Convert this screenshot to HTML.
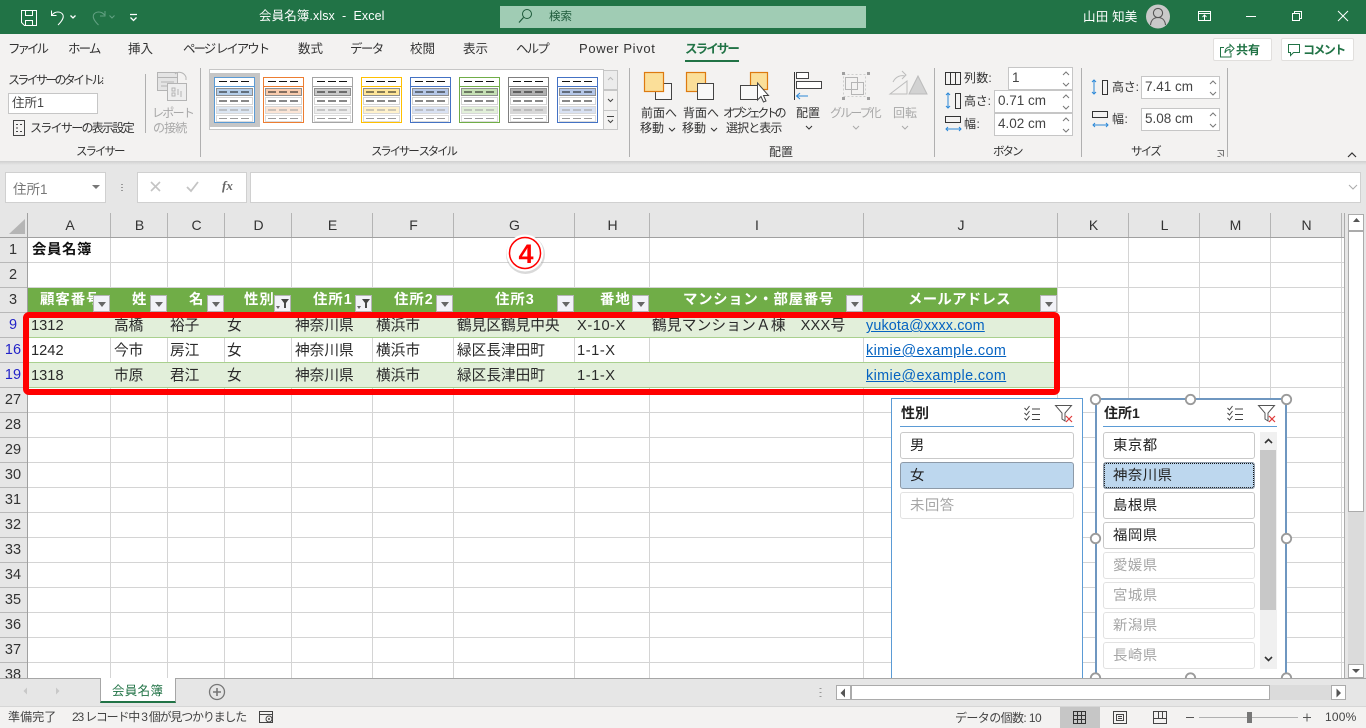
<!DOCTYPE html>
<html lang="ja"><head><meta charset="utf-8"><title>会員名簿.xlsx - Excel</title>
<style>
*{box-sizing:border-box}
html,body{margin:0;padding:0}
body{width:1366px;height:728px;position:relative;overflow:hidden;background:#e6e6e6;font-family:"Liberation Sans","Noto Sans CJK JP",sans-serif;color:#333}
.t{position:absolute;line-height:16px;white-space:nowrap;font-size:12px}
.b{position:absolute}
.g{color:#a8a8a8}
.inp{position:absolute;background:#fff;border:1px solid #c6c6c6;font-size:13.5px;line-height:20px;padding-left:3px;color:#444}
.c{font-size:14.67px;color:#2a2a2a;top:318px}
.r2{top:343px}.r3{top:368px}
.h{font-size:14.4px;font-weight:700;color:#fff;top:292px;letter-spacing:1px}
.cl{font-size:14px;color:#333;top:217px;text-align:center}
.rn{font-size:14.5px;color:#333;left:0;width:26px;text-align:center}
.fb{position:absolute;top:295px;width:17px;height:17px;background:#f2f2f8;border:1px solid #b4b4b4}
.fb:after{content:"";position:absolute;left:4px;top:6px;border:4px solid transparent;border-top:5px solid #666;border-bottom:0}
.ff:after{left:6px;top:3px;border:0;width:8px;height:9px;background:#444;clip-path:polygon(0 0,100% 0,62% 45%,62% 100%,38% 100%,38% 45%)}
.ff:before{content:"";position:absolute;left:1px;top:10px;border:2.5px solid transparent;border-top:3px solid #666;border-bottom:0}
.ml{font-size:14.4px;color:#0563c1;left:866px;text-decoration:underline;letter-spacing:.38px}
.it{position:absolute;height:27px;background:#fff;border:1px solid #c9c9c9;border-radius:3px;font-size:14.4px;line-height:26px;padding-left:9px;color:#222;letter-spacing:.5px}
.it.s{background:#bdd7ee;border-color:#8d9aa8}
.it.n{border-color:#e2e2e2;color:#a6a6a6}
.sl{position:absolute;top:398px;height:282px;background:#fff}
.st{position:absolute;font-size:14px;font-weight:700;line-height:16px;color:#222}
.hl{position:absolute;top:426px;height:1px;background:#5b9bd5}
</style></head><body>

<!-- title bar -->
<div class="b" style="left:0;top:0;width:1366px;height:34px;background:#217346"></div>
<div class="b" style="left:500px;top:6px;width:366px;height:22px;background:#a0ccb4"></div>
<div class="t" style="left:259px;top:8px;color:#fff;font-size:12.5px;letter-spacing:.1px">会員名簿.xlsx&nbsp; -&nbsp; Excel</div>
<div class="t" style="left:549px;top:9px;color:#1d5a3a;font-size:11.5px">検索</div>
<div class="t" style="left:1083px;top:9px;color:#fff;font-size:12.5px;letter-spacing:.2px">山田 知美</div>

<!-- ribbon -->
<div class="b" style="left:0;top:34px;width:1366px;height:127px;background:#f3f2f1"></div>
<div class="b" style="left:0;top:161px;width:1366px;height:4px;background:linear-gradient(#cfcfcf,#e6e6e6)"></div>
<div class="t" style="left:8px;top:41px;font-size:12.5px;letter-spacing:-3px">ファイル</div>
<div class="t" style="left:68px;top:41px;font-size:12.5px;letter-spacing:-1.9px">ホーム</div>
<div class="t" style="left:128px;top:41px;font-size:12.5px">挿入</div>
<div class="t" style="left:183px;top:41px;font-size:12.5px;letter-spacing:-2px">ページ レイアウト</div>
<div class="t" style="left:298px;top:41px;font-size:12.5px">数式</div>
<div class="t" style="left:350px;top:41px;font-size:12.5px;letter-spacing:-1.6px">データ</div>
<div class="t" style="left:410px;top:41px;font-size:12.5px">校閲</div>
<div class="t" style="left:463px;top:41px;font-size:12.5px">表示</div>
<div class="t" style="left:516px;top:41px;font-size:12.5px;letter-spacing:-1.9px">ヘルプ</div>
<div class="t" style="left:579px;top:41px;font-size:13px;letter-spacing:.65px">Power Pivot</div>
<div class="t" style="left:685px;top:41px;font-size:12.5px;font-weight:700;color:#217346;letter-spacing:-1.9px">スライサー</div>
<div class="b" style="left:685px;top:60px;width:54px;height:2px;background:#217346"></div>
<div class="b" style="left:1213px;top:38px;width:59px;height:23px;background:#fff;border:1px solid #e1dfdd;border-radius:2px"></div>
<div class="b" style="left:1281px;top:38px;width:73px;height:23px;background:#fff;border:1px solid #e1dfdd;border-radius:2px"></div>
<div class="t" style="left:1236px;top:42px;font-size:12px;font-weight:700;color:#217346">共有</div>
<div class="t" style="left:1303px;top:42px;font-size:12px;font-weight:700;color:#217346;letter-spacing:-1.6px">コメント</div>

<div class="t" style="left:8px;top:72px;letter-spacing:-2.7px">スライサーのタイトル:</div>
<div class="inp" style="left:8px;top:93px;width:90px;height:21px;font-size:12.5px;line-height:19px;padding-left:3px">住所1</div>
<div class="t" style="left:30px;top:120px;letter-spacing:-1.7px">スライサーの表示設定</div>
<div class="t g" style="left:152px;top:105px;letter-spacing:-1.7px">レポート</div>
<div class="t g" style="left:153px;top:120px;letter-spacing:-.9px">の接続</div>
<div class="t" style="left:76px;top:144px;font-size:11.5px;letter-spacing:-2px">スライサー</div>
<div class="t" style="left:371px;top:144px;font-size:11.5px;letter-spacing:-2.2px">スライサー スタイル</div>
<div class="t" style="left:769px;top:144px;font-size:12px">配置</div>
<div class="t" style="left:993px;top:144px;font-size:11.5px;letter-spacing:-2px">ボタン</div>
<div class="t" style="left:1131px;top:144px;font-size:11.5px;letter-spacing:-1.7px">サイズ</div>

<div class="t" style="left:641px;top:105px">前面へ</div>
<div class="t" style="left:640px;top:120px">移動</div>
<div class="t" style="left:683px;top:105px">背面へ</div>
<div class="t" style="left:682px;top:120px">移動</div>
<div class="t" style="left:723px;top:105px;letter-spacing:-3.4px">オブジェクトの</div>
<div class="t" style="left:726px;top:120px;letter-spacing:-.9px">選択と表示</div>
<div class="t" style="left:796px;top:105px">配置</div>
<div class="t g" style="left:830px;top:105px;letter-spacing:-1.9px">グループ化</div>
<div class="t g" style="left:893px;top:105px">回転</div>

<div class="t" style="left:964px;top:70px;letter-spacing:.2px">列数:</div>
<div class="t" style="left:964px;top:93px;letter-spacing:-.2px">高さ:</div>
<div class="t" style="left:964px;top:116px;letter-spacing:.5px">幅:</div>
<div class="inp" style="left:1008px;top:67px;width:65px;height:23px">1</div>
<div class="inp" style="left:994px;top:90px;width:79px;height:23px">0.71 cm</div>
<div class="inp" style="left:994px;top:113px;width:79px;height:23px">4.02 cm</div>
<div class="t" style="left:1112px;top:79px;letter-spacing:-.2px">高さ:</div>
<div class="t" style="left:1112px;top:111px;letter-spacing:.5px">幅:</div>
<div class="inp" style="left:1141px;top:76px;width:79px;height:23px">7.41 cm</div>
<div class="inp" style="left:1141px;top:108px;width:79px;height:23px">5.08 cm</div>

<!-- formula bar -->
<div class="inp" style="left:5px;top:172px;width:101px;height:31px;border-color:#d0d0d0;font-size:13.5px;line-height:34px;color:#777;padding-left:7px">住所1</div>
<div class="b" style="left:137px;top:172px;width:110px;height:31px;background:#fff;border:1px solid #d0d0d0"></div>
<div class="b" style="left:250px;top:172px;width:1111px;height:31px;background:#fff;border:1px solid #d0d0d0"></div>
<div class="t" style="left:222px;top:178px;font-family:'Liberation Serif',serif;font-style:italic;font-weight:700;font-size:13px;color:#666">fx</div>

<!-- sheet -->
<div class="b" style="left:28px;top:238px;width:1316px;height:440px;background:#fff"></div>
<div class="b" style="left:28px;top:287px;width:1029px;height:25px;background:#70ad47"></div>
<div class="b" style="left:28px;top:312px;width:1029px;height:25px;background:#e2efda"></div>
<div class="b" style="left:28px;top:362px;width:1029px;height:25px;background:#e2efda"></div>

<svg class="b" style="left:0;top:0" width="1366" height="728" viewBox="0 0 1366 728" fill="none">
 <defs>
  <symbol id="th" width="42" height="47" viewBox="0 0 42 47" overflow="visible">
   <rect x=".5" y=".5" width="40" height="45" fill="#fff" stroke="currentColor"/>
   <rect x=".5" y="9" width="40" height="1" fill="currentColor"/>
   <rect x="2.5" y="11.5" width="36" height="7" fill="var(--a)" stroke="#8f8f8f"/>
   <rect x="2.5" y="20.5" width="36" height="7" fill="#fff" stroke="#d4d4d4"/>
   <rect x="2.5" y="29.5" width="36" height="7" fill="var(--b)" stroke="#d8d8d8"/>
   <rect x="2.5" y="38.5" width="36" height="6" fill="#fff" stroke="#dcdcdc"/>
   <path d="M5 4.5h8M16 4.5h8M27 4.5h8M5 15h8M16 15h8M27 15h8M5 24h8M16 24h8M27 24h8" stroke="#111"/>
   <path d="M5 33h8M16 33h8M27 33h8M5 41.5h8M16 41.5h8M27 41.5h8" stroke="#9a9a9a"/>
  </symbol>
  <symbol id="spin" width="12" height="22" viewBox="0 0 12 22"><path d="M3 7l3-3 3 3M3 15l3 3 3-3" stroke="#777" fill="none"/></symbol>
 </defs>

 <!-- QAT -->
 <g stroke="#fff" stroke-width="1" fill="none">
  <path d="M21.5 10.5h15v15h-12l-3-3z"/><path d="M25.5 10.5v5h7v-5M25.5 25.5v-5h7v5"/>
  <path d="M51.5 10.5v5h5" /><path d="M52 15c3-4 9-4 11 0 1 3-1 6-5 10"/>
  <path d="M70.5 15.5l2.5 2.5 2.5-2.5" stroke-width="1.3"/>
  <g stroke="#63a183"><path d="M105 11v5h-5"/><path d="M104.5 15c-3-4-9-4-11 0-1 3 1 6 5 10"/><path d="M109.5 15.5l2.5 2.5 2.5-2.5"/></g>
  <path d="M130 14.5h7M130.5 17.5l3 3 3-3" stroke-width="1.3"/>
 </g>
 <!-- search icon -->
 <circle cx="527" cy="14" r="4.5" stroke="#1d5a3a"/><path d="M523.5 17.5l-4.5 5" stroke="#1d5a3a" stroke-width="1.2"/>
 <!-- user -->
 <circle cx="1158" cy="16.500" r="12" fill="#c9c9c9"/>
 <circle cx="1158" cy="13" r="4.6" stroke="#555" stroke-width="1.1"/><path d="M1150.500 25c.5-5 3.500-7.500 7.500-7.500s7 2.500 7.500 7.500" stroke="#555" stroke-width="1.1"/>
 <!-- window controls -->
 <g stroke="#fff">
  <path d="M1198.500 11.500h12v9h-12zM1198.500 13.500h12M1204.500 20v-4.500M1202.500 17l2-2 2 2"/>
  <path d="M1246 16.500h10" stroke-width="1"/>
  <path d="M1292.500 13.500h7v7h-7zM1294.500 13v-1.500h7v7h-1.500"/>
  <path d="M1338 11l10 10M1348 11l-10 10"/>
 </g>
 <!-- share / comment -->
 <g stroke="#217346" fill="none"><path d="M1224 47.500h-3.500v9.500h10.500v-4"/><path d="M1225 53c0-4 2-6 5-6v-2.500l4 4-4 4v-3c-2 0-4 1-5 3.500z" /></g>
 <path d="M1288.500 44.500h11v8h-6l-3 3v-3h-2z" stroke="#217346"/>

 <!-- ribbon left icons -->
 <rect x="13.500" y="120.500" width="11" height="15" stroke="#444"/><path d="M16 124.500h2M16 128h2M16 131.500h2M20 124.500h2M20 131.500h2" stroke="#444"/>
 <g stroke="#b0b0b0"><path d="M145.500 74v59M200.500 68v89M629.500 68v89M934.500 68v89M1081.500 68v89M1227.500 68v89"/></g>
 <g stroke="#b4b4b4" fill="#e4e4e4"><rect x="157.500" y="72.500" width="20" height="18"/><path d="M157.500 77.500h20M161 82h13M161 86h13"/><rect x="167.500" y="83.500" width="19" height="17" fill="#eee"/><path d="M172 88h3v3h-3zM172 93h3v3h-3zM178 89v6M181 91v6" fill="none"/><path d="M175 74c3-3 9-2 11 3v3" fill="none"/></g>

 <!-- gallery -->
 <rect x="209.500" y="69.500" width="394" height="60" fill="#fff" stroke="#c6c6c6"/>
 <rect x="210" y="73" width="50" height="54" fill="#c6c6c6"/>
 <use href="#th" x="214" y="77" style="color:#5b9bd5;--a:#b4cde8;--b:#dce6f2"/>
 <use href="#th" x="263" y="77" style="color:#ed7d31;--a:#f8cbad;--b:#fbe5d6"/>
 <use href="#th" x="312" y="77" style="color:#a5a5a5;--a:#c9c9c9;--b:#ededed"/>
 <use href="#th" x="361" y="77" style="color:#ffc000;--a:#ffe699;--b:#fff2cc"/>
 <use href="#th" x="410" y="77" style="color:#4472c4;--a:#b4c6e7;--b:#d9e2f3"/>
 <use href="#th" x="459" y="77" style="color:#70ad47;--a:#c5e0b4;--b:#e2f0d9"/>
 <use href="#th" x="508" y="77" style="color:#7f7f7f;--a:#b0b0b0;--b:#d9d9d9"/>
 <use href="#th" x="557" y="77" style="color:#4472c4;--a:#b4c6e7;--b:#d9e2f3"/>
 <g fill="#f3f2f1" stroke="#c6c6c6"><rect x="603.500" y="70.500" width="14" height="19" fill="#ececec"/><rect x="603.500" y="90.500" width="14" height="20"/><rect x="603.500" y="110.500" width="14" height="19"/></g>
 <path d="M608 80l2.500-2.500 2.500 2.500" stroke="#bbb"/><path d="M608 99l2.500 2.500 2.500-2.500M607 116.500h7M608 120l2.500 2.500 2.500-2.500" stroke="#444"/>

 <!-- arrange icons -->
 <rect x="655.500" y="83.500" width="16" height="16" fill="#f8f8f8" stroke="#444"/>
 <rect x="644.500" y="72.500" width="19" height="19" fill="#fbdf99" stroke="#dd7a10" stroke-width="1.2"/>
 <rect x="686.500" y="72.500" width="19" height="19" fill="#fbdf99" stroke="#dd7a10" stroke-width="1.2"/>
 <rect x="697.500" y="83.500" width="16" height="16" fill="#f8f8f8" stroke="#444"/>
 <rect x="750.500" y="72.500" width="17" height="17" fill="#fbdf99" stroke="#dd7a10" stroke-width="1.2"/>
 <rect x="740.500" y="85.500" width="17" height="14" fill="#f8f8f8" stroke="#444"/>
 <path d="M757.500 83v17l3.500-3.500 2.500 5.500 2.500-1-2.500-5.500h5z" fill="#fff" stroke="#444"/>
 <path d="M794.500 72v28" stroke="#333"/>
 <rect x="796.500" y="72.500" width="12" height="6" fill="#fff" stroke="#444"/><rect x="796.500" y="81.500" width="25" height="7" fill="#fff" stroke="#444"/>
 <path d="M808 96h-11M800 93l-3.500 3 3.500 3" stroke="#2b88d8"/>
 <g stroke="#b5b5b5"><rect x="845.500" y="77.500" width="12" height="12"/><rect x="851.500" y="82.500" width="12" height="12"/><path d="M843.500 74.500h22v22h-22z" stroke-dasharray="2 2" opacity=".6"/></g>
 <g fill="#9f9f9f"><rect x="842" y="72" width="3" height="3"/><rect x="867" y="72" width="3" height="3"/><rect x="842" y="97" width="3" height="3"/><rect x="867" y="97" width="3" height="3"/></g>
 <path d="M909 94l9-18 9 18z" fill="#d2d2d2" stroke="#bbb"/><path d="M890 94l17-13v13zM893 82c3-6 8-7 12-6M902 71l4 4-4 4" stroke="#bcbcbc" fill="none"/>
 <path d="M672 127l3 3 3-3" stroke="#333" transform="translate(-3 1)"/><path d="M714 127l3 3 3-3" stroke="#333" transform="translate(-3 1)"/>
 <path d="M806 126l3 3 3-3" stroke="#333"/><path d="M853 126l3 3 3-3M902 126l3 3 3-3" stroke="#aaa"/>

 <!-- button / size icons -->
 <path d="M945.500 72.500h15v12h-15zM950.500 72v13M955.500 72v13" stroke="#333"/>
 <path d="M955.500 93.500h5v15h-5z" stroke="#333"/>
 <path d="M948 93v15M946 95l2-2 2 2M946 106l2 2 2-2" stroke="#2b88d8"/>
 <path d="M945.500 116.500h15v6h-15z" stroke="#333"/><path d="M946 129h15M948 127l-2 2 2 2M959 127l2 2-2 2" stroke="#2b88d8"/>
 <path d="M1102.500 80.500h5v14h-5z" stroke="#333"/><path d="M1094 80v14M1092 82l2-2 2 2M1092 92l2 2 2-2" stroke="#2b88d8"/>
 <path d="M1092.500 111.500h15v6h-15z" stroke="#333"/><path d="M1093 125h15M1095 123l-2 2 2 2M1106 123l2 2-2 2" stroke="#2b88d8"/>
 <use href="#spin" x="1060" y="68"/><use href="#spin" x="1060" y="91"/><use href="#spin" x="1060" y="114"/>
 <use href="#spin" x="1207" y="77"/><use href="#spin" x="1207" y="109"/>
 <path d="M1217.500 150.500h6v6M1219.500 152.500l3 3M1217.500 156.500h3" stroke="#777"/>
 <path d="M1348 157l4-4 4 4" stroke="#333" stroke-width="1.2"/>

 <!-- formula bar details -->
 <path d="M92 185h8l-4 4z" fill="#777"/>
 <path d="M122 184v1M122 187v1M122 190v1" stroke="#999" stroke-width="2"/>
 <path d="M151 182l9 9M160 182l-9 9" stroke="#c4c4c4" stroke-width="1.6"/>
 <path d="M187 187l4 4 7-9" stroke="#c4c4c4" stroke-width="1.8"/>
 <path d="M1349 185l4 4 4-4" stroke="#aaa"/>

 <!-- headers -->
 <rect x="0" y="213" width="1344" height="25" fill="#e6e6e6"/>
 <rect x="0" y="238" width="28" height="440" fill="#e6e6e6"/>
 <path d="M25 219v15H9z" fill="#b5b5b5"/>
 <path d="M0 237.500h1344M27.500 213v465" stroke="#a0a0a0"/>
 <path d="M110.500 213v24M167.500 213v24M224.500 213v24M291.500 213v24M372.500 213v24M453.500 213v24M574.500 213v24M649.500 213v24M863.500 213v24M1057.500 213v24M1128.500 213v24M1199.500 213v24M1270.500 213v24M1341.500 213v24" stroke="#b4b4b4"/>
 <path d="M0 262.500h27M0 287.500h27M0 312.500h27M0 337.500h27M0 362.500h27M0 387.500h27M0 412.500h27M0 437.500h27M0 462.500h27M0 487.500h27M0 512.500h27M0 537.500h27M0 562.500h27M0 587.500h27M0 612.500h27M0 637.500h27M0 662.500h27" stroke="#b8b8b8"/>
 <!-- grid -->
 <path d="M110.500 238v49M167.500 238v49M224.500 238v49M291.500 238v49M372.500 238v49M453.500 238v49M574.500 238v49M649.500 238v49M863.500 238v49M1057.500 238v440M1128.500 238v440M1199.500 238v440M1270.500 238v440M1341.500 238v440" stroke="#d4d4d4"/>
 <path d="M110.500 337v25M167.500 337v25M224.500 337v25M291.500 337v25M372.500 337v25M453.500 337v25M574.500 337v25M649.500 337v25M863.500 337v25M110.500 387v291M167.500 387v291M224.500 387v291M291.500 387v291M372.500 387v291M453.500 387v291M574.500 387v291M649.500 387v291M863.500 387v291" stroke="#d4d4d4"/>
 <path d="M28 262.500h1316M28 287.500h1316M1057 312.500h287M1057 337.500h287M1057 362.500h287M28 387.500h1316M28 412.500h1316M28 437.500h1316M28 462.500h1316M28 487.500h1316M28 512.500h1316M28 537.500h1316M28 562.500h1316M28 587.500h1316M28 612.500h1316M28 637.500h1316M28 662.500h1316" stroke="#d4d4d4"/>
 <path d="M28 337.500h1029M28 362.500h1029M28 387.500h1029" stroke="#a9d08e"/>
</svg>

<div class="t cl" style="left:29px;width:82px">A</div><div class="t cl" style="left:111px;width:57px">B</div><div class="t cl" style="left:168px;width:57px">C</div><div class="t cl" style="left:225px;width:67px">D</div><div class="t cl" style="left:292px;width:81px">E</div><div class="t cl" style="left:373px;width:81px">F</div><div class="t cl" style="left:454px;width:121px">G</div><div class="t cl" style="left:575px;width:75px">H</div><div class="t cl" style="left:650px;width:214px">I</div><div class="t cl" style="left:864px;width:194px">J</div><div class="t cl" style="left:1058px;width:71px">K</div><div class="t cl" style="left:1129px;width:71px">L</div><div class="t cl" style="left:1200px;width:71px">M</div><div class="t cl" style="left:1271px;width:71px">N</div>

<div class="t rn" style="top:242px">1</div><div class="t rn" style="top:267px">2</div><div class="t rn" style="top:292px">3</div>
<div class="t rn" style="top:317px;color:#2323c8">9</div><div class="t rn" style="top:342px;color:#2323c8">16</div><div class="t rn" style="top:367px;color:#2323c8">19</div>
<div class="t rn" style="top:392px">27</div><div class="t rn" style="top:417px">28</div><div class="t rn" style="top:442px">29</div><div class="t rn" style="top:467px">30</div><div class="t rn" style="top:492px">31</div><div class="t rn" style="top:517px">32</div><div class="t rn" style="top:542px">33</div><div class="t rn" style="top:567px">34</div><div class="t rn" style="top:592px">35</div><div class="t rn" style="top:617px">36</div><div class="t rn" style="top:642px">37</div><div class="t rn" style="top:667px">38</div>

<div class="t" style="left:32px;top:242px;font-size:14.4px;font-weight:700;color:#111;letter-spacing:.6px">会員名簿</div>

<div class="b" style="left:40px;top:287px;width:56px;height:25px;overflow:hidden"><div class="t h" style="left:0;top:5px">顧客番号</div></div>
<div class="t h" style="left:132px">姓</div><div class="t h" style="left:189px">名</div><div class="t h" style="left:244px">性別</div><div class="t h" style="left:313px">住所1</div><div class="t h" style="left:394px">住所2</div><div class="t h" style="left:495px">住所3</div><div class="t h" style="left:600px">番地</div><div class="t h" style="left:683px;letter-spacing:.7px">マンション・部屋番号</div><div class="t h" style="left:908px;letter-spacing:.3px">メールアドレス</div>

<div class="fb" style="left:93px"></div><div class="fb" style="left:150px"></div><div class="fb" style="left:207px"></div><div class="fb ff" style="left:274px"></div><div class="fb ff" style="left:355px"></div><div class="fb" style="left:436px"></div><div class="fb" style="left:557px"></div><div class="fb" style="left:632px"></div><div class="fb" style="left:846px"></div><div class="fb" style="left:1040px"></div>

<div class="t c" style="left:31px">1312</div><div class="t c" style="left:114px">高橋</div><div class="t c" style="left:170px">裕子</div><div class="t c" style="left:227px">女</div><div class="t c" style="left:295px">神奈川県</div><div class="t c" style="left:376px">横浜市</div><div class="t c" style="left:457px">鶴見区鶴見中央</div><div class="t c" style="left:577px;letter-spacing:.55px">X-10-X</div><div class="t c" style="left:652px;letter-spacing:.2px">鶴見マンションＡ棟　XXX号</div>
<div class="t c r2" style="left:31px">1242</div><div class="t c r2" style="left:114px">今市</div><div class="t c r2" style="left:170px">房江</div><div class="t c r2" style="left:227px">女</div><div class="t c r2" style="left:295px">神奈川県</div><div class="t c r2" style="left:376px">横浜市</div><div class="t c r2" style="left:457px">緑区長津田町</div><div class="t c r2" style="left:577px;letter-spacing:.55px">1-1-X</div>
<div class="t c r3" style="left:31px">1318</div><div class="t c r3" style="left:114px">市原</div><div class="t c r3" style="left:170px">君江</div><div class="t c r3" style="left:227px">女</div><div class="t c r3" style="left:295px">神奈川県</div><div class="t c r3" style="left:376px">横浜市</div><div class="t c r3" style="left:457px">緑区長津田町</div><div class="t c r3" style="left:577px;letter-spacing:.55px">1-1-X</div>
<div class="t ml" style="top:318px;letter-spacing:.12px">yukota@xxxx.com</div><div class="t ml" style="top:343px">kimie@example.com</div><div class="t ml" style="top:368px">kimie@example.com</div>

<!-- red frame -->
<div class="b" style="left:23px;top:312px;width:1037px;height:83px;border:6.5px solid #ff0000;border-radius:6px"></div>

<!-- step badge -->
<svg class="b" style="left:500px;top:228px" width="50" height="50" viewBox="0 0 50 50"><circle cx="25.500" cy="26.500" r="19.500" fill="#aaa" opacity=".45"/><circle cx="25" cy="25" r="18.500" fill="#fff"/><circle cx="25" cy="25" r="15.500" fill="#fff" stroke="#ff0000" stroke-width="1.500"/></svg>
<div class="t" style="left:510px;top:240px;width:32px;text-align:center;font-size:27px;font-weight:700;color:#ff0000;line-height:28px">4</div>

<!-- slicers -->
<div class="b" style="left:0;top:0;width:1366px;height:678px;overflow:hidden">
 <div class="sl" style="left:891px;width:192px;border:1.5px solid #5b9bd5"></div>
 <div class="st" style="left:901px;top:405px">性別</div>
 <div class="hl" style="left:900px;width:174px"></div>
 <div class="it" style="left:900px;top:432px;width:174px">男</div>
 <div class="it s" style="left:900px;top:462px;width:174px">女</div>
 <div class="it n" style="left:900px;top:492px;width:174px">未回答</div>

 <div class="sl" style="left:1095px;width:192px;border:2px solid #6f97c0"></div>
 <div class="st" style="left:1104px;top:405px">住所1</div>
 <div class="hl" style="left:1103px;width:174px"></div>
 <div class="it" style="left:1103px;top:432px;width:152px">東京都</div>
 <div class="it s" style="left:1103px;top:462px;width:152px;outline:1px dotted #111;outline-offset:-2px">神奈川県</div>
 <div class="it" style="left:1103px;top:492px;width:152px">島根県</div>
 <div class="it" style="left:1103px;top:522px;width:152px">福岡県</div>
 <div class="it n" style="left:1103px;top:552px;width:152px">愛媛県</div>
 <div class="it n" style="left:1103px;top:582px;width:152px">宮城県</div>
 <div class="it n" style="left:1103px;top:612px;width:152px">新潟県</div>
 <div class="it n" style="left:1103px;top:642px;width:152px">長崎県</div>
 <div class="b" style="left:1260px;top:432px;width:17px;height:237px;background:#f0f0f0"></div>
 <div class="b" style="left:1260px;top:450px;width:16px;height:160px;background:#c8c8c8"></div>
 <svg class="b" style="left:0;top:0" width="1366" height="678" viewBox="0 0 1366 678" fill="none">
  <path d="M1265 443l3.500-3.500 3.500 3.500M1265 657l3.500 3.500 3.500-3.500" stroke="#333" stroke-width="1.600"/>
  <path d="M1024.500 408l2 2 3-4M1024.500 413l2 2 3-4M1024.500 418l2 2 3-4" stroke="#444"/><path d="M1032 409h8M1032 414.500h8M1032 419.500h8" stroke="#444"/>
  <path d="M1055.500 405.500h16l-6.500 7.500v8l-3-2v-6z" stroke="#555"/><path d="M1066 416l6 6M1072 416l-6 6" stroke="#e03b3b" stroke-width="1.200"/>
  <path d="M1227.500 408l2 2 3-4M1227.500 413l2 2 3-4M1227.500 418l2 2 3-4" stroke="#444"/><path d="M1235 409h8M1235 414.500h8M1235 419.500h8" stroke="#444"/>
  <path d="M1258.500 405.500h16l-6.500 7.500v8l-3-2v-6z" stroke="#555"/><path d="M1269 416l6 6M1275 416l-6 6" stroke="#e03b3b" stroke-width="1.200"/>
  <g fill="#fff" stroke="#9a9a9a" stroke-width="1.800"><circle cx="1095.500" cy="399.500" r="4.700"/><circle cx="1190.500" cy="399.500" r="4.700"/><circle cx="1286.500" cy="399.500" r="4.700"/><circle cx="1095.500" cy="538.500" r="4.700"/><circle cx="1286.500" cy="538.500" r="4.700"/><circle cx="1095.500" cy="678" r="4.700"/><circle cx="1190.500" cy="678" r="4.700"/><circle cx="1286.500" cy="678" r="4.700"/></g>
 </svg>
</div>

<!-- right scrollbar -->
<div class="b" style="left:1344px;top:213px;width:22px;height:465px;background:#e6e6e6;border-left:1px solid #ababab"></div>
<div class="b" style="left:1348px;top:231px;width:16px;height:434px;background:#dbdbdb"></div>
<div class="b" style="left:1348px;top:231px;width:16px;height:281px;background:#fff;border:1px solid #ababab"></div>
<div class="b" style="left:1348px;top:214px;width:16px;height:17px;background:#fff;border:1px solid #ababab"></div>
<div class="b" style="left:1348px;top:664px;width:16px;height:14px;background:#fff;border:1px solid #ababab"></div>

<!-- tab bar -->
<div class="b" style="left:0;top:678px;width:1366px;height:28px;background:#e6e6e6;border-top:1px solid #a6a6a6"></div>
<div class="b" style="left:100px;top:678px;width:76px;height:25px;background:#fff;border:1px solid #a6a6a6;border-top:0;border-bottom:2px solid #217346"></div>
<div class="t" style="left:112px;top:683px;font-size:12.5px;color:#217346;letter-spacing:.3px">会員名簿</div>

<div class="b" style="left:836px;top:685px;width:510px;height:15px;background:#dbdbdb"></div>
<div class="b" style="left:851px;top:685px;width:419px;height:15px;background:#fff;border:1px solid #ababab"></div>
<div class="b" style="left:836px;top:685px;width:15px;height:15px;background:#fff;border:1px solid #ababab"></div>
<div class="b" style="left:1331px;top:685px;width:15px;height:15px;background:#fff;border:1px solid #ababab"></div>

<!-- status bar -->
<div class="b" style="left:0;top:706px;width:1366px;height:22px;background:#f3f2f1;border-top:1px solid #d6d6d6"></div>
<div class="b" style="left:1060px;top:707px;width:40px;height:21px;background:#c6c6c6"></div>
<div class="t" style="left:8px;top:709px;font-size:12px;color:#444;letter-spacing:.1px">準備完了</div>
<div class="t" style="left:72px;top:709px;font-size:12px;color:#444;letter-spacing:-1.2px">23 レコード中 3 個が見つかりました</div>
<div class="t" style="left:955px;top:710px;font-size:12px;color:#444;letter-spacing:-.6px">データの個数: 10</div>
<div class="t" style="left:1325px;top:709px;font-size:12px;color:#444;letter-spacing:.2px">100%</div>

<svg class="b" style="left:0;top:0;pointer-events:none" width="1366" height="728" viewBox="0 0 1366 728" fill="none">
 <path d="M1353 222l3.500-4 3.500 4z" fill="#555"/><path d="M1352 669h8l-4 4z" fill="#555"/>
 <path d="M845 688.500v9l-4.500-4.500z" fill="#555"/><path d="M1336.500 688.500v9l4.500-4.500z" fill="#555"/>
 <path d="M27 687.500v7l-3.500-3.500zM56 687.500v7l3.500-3.500z" fill="#c8c8c8"/>
 <circle cx="217" cy="692" r="7.500" stroke="#777" stroke-width="1.300"/><path d="M213 692h8M217 688v8" stroke="#777" stroke-width="1.600"/>
 <path d="M820.500 688v1M820.500 692v1M820.500 696v1" stroke="#999" stroke-width="2"/>
 <rect x="259.500" y="711.500" width="13" height="11" stroke="#444"/><path d="M259 714.500h14" stroke="#444"/><circle cx="269" cy="719" r="3" fill="#f3f2f1" stroke="#444"/><circle cx="269" cy="719" r="1" fill="#444"/>
 <path d="M1073.500 711.500h12v12h-12zM1077.500 711v13M1081.500 711v13M1073 715.500h13M1073 719.500h13" stroke="#333"/>
 <path d="M1113.500 711.500h13v12h-13z" stroke="#444"/><path d="M1116.500 714.500h7v6h-7zM1118 716.500h4M1118 718.500h4" stroke="#444"/>
 <path d="M1153.500 711.500h13v12h-13zM1153 718.500h14M1158.500 711v7M1162.500 711v7" stroke="#444"/>
 <path d="M1186 717.500h8M1303 717.500h8M1307 713.500v8" stroke="#555"/>
 <path d="M1199 717.500h99" stroke="#b0b0b0"/><rect x="1247" y="712" width="5" height="11" fill="#777"/>
</svg>
</body></html>
